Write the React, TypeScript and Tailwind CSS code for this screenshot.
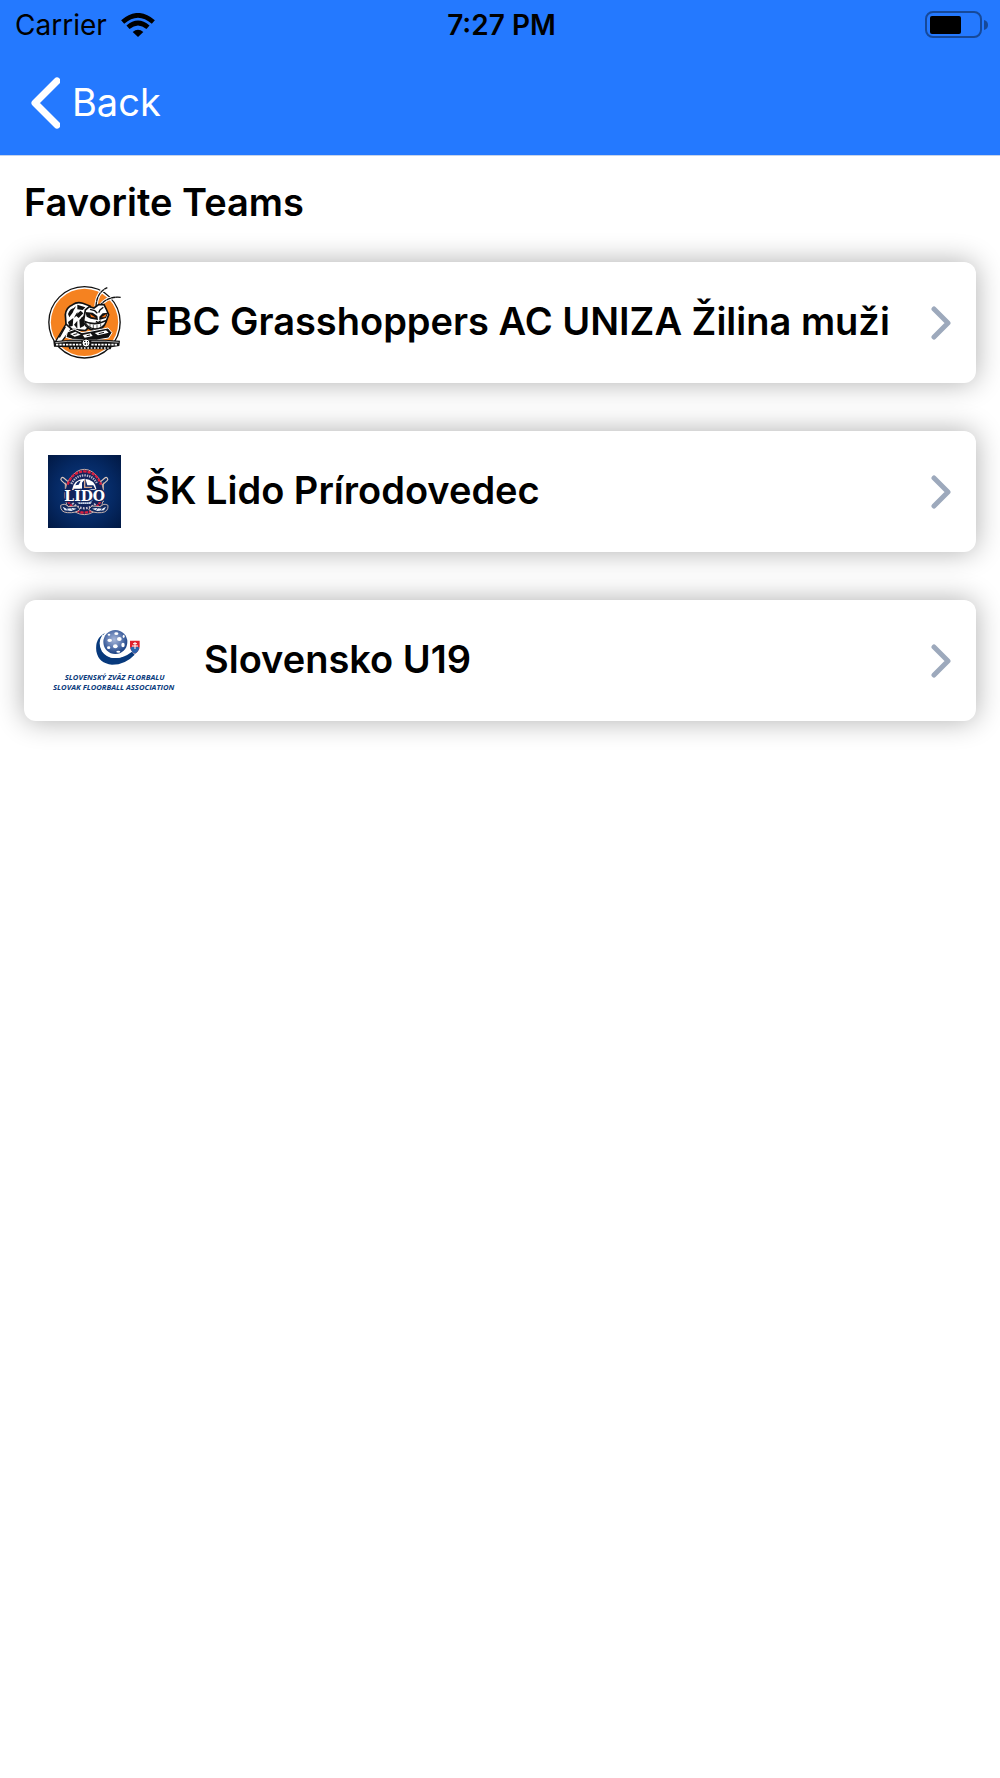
import type { ReactNode } from "react";

function GrasshoppersLogo() {
  return (
    <svg viewBox="24 32 219 219" className="h-[73px] w-[73px] shrink-0" role="img" aria-label="FBC Grasshoppers">
      <circle cx="133.500" cy="141" r="107" fill="#fff" stroke="#111" strokeWidth="4" />
      <circle cx="133.500" cy="141" r="101" fill="#f58220" />
      {/* antennae */}
      <path d="M168 94Q170 50 202 37M178 94Q200 62 242 66" fill="none" stroke="#fff" strokeWidth="10" />
      <path d="M168 94Q170 50 202 37M178 94Q200 62 242 66" fill="none" stroke="#111" strokeWidth="4" strokeDasharray="14 1" />
      {/* stick */}
      <path d="M84 136L46 200L60 206L96 158Z" fill="#fff" stroke="#111" strokeWidth="4" />
      <path d="M76 154L58 186" stroke="#111" strokeWidth="4" />
      {/* body */}
      <path d="M76 118Q78 96 98 88Q112 78 128 84L150 92L152 150L136 166L96 162L78 146Z" fill="#fff" stroke="#111" strokeWidth="5" />
      <path d="M84 116Q90 98 104 98L98 112L88 126ZM112 88L136 96L128 104L112 102ZM84 140L100 128L98 152L88 154ZM106 120L122 106L130 114L116 128ZM118 134L132 120V152L120 158ZM102 148L112 136L112 160Z" fill="#111" />
      <path d="M106 94L100 104M112 112L104 126M126 126L122 146" stroke="#111" strokeWidth="3" />
      {/* head */}
      <path d="M136 104L148 94L162 98L176 88L192 88L200 104L206 118L198 140Q190 164 164 166Q142 162 130 140Z" fill="#fff" stroke="#111" strokeWidth="5" />
      <path d="M136 110L158 112L172 122L174 134L152 130L140 124ZM204 112L188 114L178 124L178 134L198 128Z" fill="#111" />
      <path d="M150 116L168 127L153 125ZM200 115L184 126L196 126Z" fill="#f36f10" />
      <path d="M130 134Q164 152 202 132Q196 160 166 164Q140 158 130 134Z" fill="#111" />
      <path d="M138 142Q166 154 196 139Q190 156 165 159Q146 156 138 142Z" fill="#fff" />
      <path d="M150 146V155M160 148V158M171 148V158M182 145V154" stroke="#111" strokeWidth="2" />
      <path d="M150 102L164 106L172 114M190 96L180 104L176 112M168 138L174 142L182 136" fill="none" stroke="#111" strokeWidth="4" />
      {/* arms */}
      <path d="M82 170L104 162L126 172L150 168L204 158L216 172L206 188L170 194L98 192L78 186Z" fill="#111" stroke="#fff" strokeWidth="3" />
      <path d="M90 176L106 169L122 178L104 184ZM128 179L152 174L158 182L134 187ZM164 173L198 165L206 172L174 180Z" fill="#fff" />
      <path d="M100 178L112 175M140 181L150 179M176 175L192 171" stroke="#111" strokeWidth="3" />
      {/* name banner */}
      <path d="M40 198Q136 186 240 196L238 212L214 216L212 222H88L86 216L42 214Z" fill="#111" />
      <path d="M46 202Q80 196 124 198M154 198Q200 196 236 201" fill="none" stroke="#fff" strokeWidth="2" />
      <path d="M48 208H124M154 208H232" stroke="#fff" strokeWidth="5" strokeDasharray="7 3" />
      <path d="M92 218H206" stroke="#fff" strokeWidth="4" strokeDasharray="5 5" />
      <circle cx="138" cy="203" r="12" fill="#fff" stroke="#111" strokeWidth="3" />
      <path d="M132 198H136M141 199H144M134 206H138M142 206H144" stroke="#111" strokeWidth="4" />
    </svg>
  );
}

function LidoLogo() {
  return (
    <svg viewBox="24 29 219 219" className="h-[73px] w-[73px] shrink-0" role="img" aria-label="ŠK Lido Prírodovedec">
      <defs>
        <radialGradient id="lido-bg" r="0.700">
          <stop offset="0" stopColor="#0d3d86" />
          <stop offset="0.600" stopColor="#052862" />
          <stop offset="1" stopColor="#011944" />
        </radialGradient>
      </defs>
      <rect x="24" y="29" width="219" height="219" fill="url(#lido-bg)" />
      {/* crossed sticks */}
      <path d="M68 102L84 116M198 102L182 116" stroke="#d9c6bd" strokeWidth="14" strokeLinecap="round" />
      <path d="M68 102L84 116M198 102L182 116" stroke="#0a2a66" strokeWidth="7" strokeLinecap="round" />
      <path d="M76 112V170M190 112V170" stroke="#d9b9a5" strokeWidth="3" />
      {/* ring */}
      <path d="M80 178Q66 134 88 102Q108 72 133 72Q158 72 178 102Q200 134 186 178Q160 208 133 208Q106 208 80 178Z" fill="#12245c" stroke="#c9aca6" strokeWidth="3" />
      <path d="M83 118Q96 80 133 78Q170 80 183 118" fill="none" stroke="#d81f3f" strokeWidth="7" strokeDasharray="10 3" />
      <path d="M84 166Q100 200 133 202Q166 200 182 166" fill="none" stroke="#d81f3f" strokeWidth="7" strokeDasharray="10 3" />
      <path d="M94 116Q106 91 133 90Q160 91 172 116" fill="none" stroke="#bcb6cb" strokeWidth="7" strokeDasharray="4 3" />
      <path d="M97 173Q112 188 133 189Q154 188 169 173" fill="none" stroke="#c5becd" strokeWidth="7" strokeDasharray="5 4" />
      {/* ball */}
      <path d="M96 134Q100 102 133 100Q166 102 170 134Z" fill="#fff" />
      <path d="M106 120Q110 108 122 106L116 118ZM126 132V112L136 100L142 120H160L166 132Z" fill="#122a68" />
      <path d="M134 104V126H156" fill="none" stroke="#d8a98d" strokeWidth="4" />
      <path d="M108 163H158L152 176H116Z" fill="#dfe6f3" />
      <path d="M110 168H156M114 173H152" stroke="#17336f" strokeWidth="2" strokeDasharray="4 2" />
      {/* blades */}
      <path d="M62 180Q76 172 84 184L110 182L120 192Q108 204 82 202Q60 200 62 180ZM204 180Q190 172 182 184L156 182L146 192Q158 204 184 202Q206 200 204 180Z" fill="#10295f" stroke="#c6b4b0" strokeWidth="3" />
      <path d="M68 184L80 190L98 188L110 190L94 197L74 195ZM198 184L186 190L168 188L156 190L172 197L192 195Z" fill="#e8eef8" />
      <path d="M78 188L84 196M92 187L98 195M188 188L182 196M174 187L168 195" stroke="#17336f" strokeWidth="2" />
      <text x="134" y="166" textAnchor="middle" fill="#fff" stroke="#12245c" strokeWidth="8" paintOrder="stroke" className="font-['DejaVu_Serif','Liberation_Serif',serif] text-[42px] font-bold">LIDO</text>
    </svg>
  );
}

function SlovakFloorballLogo() {
  return (
    <svg viewBox="24 27 396 219" className="h-[73px] w-[132px] shrink-0" role="img" aria-label="Slovak Floorball Association">
      <defs>
        <radialGradient id="floorball" cx="0.450" cy="0.400" r="0.600">
          <stop offset="0" stopColor="#a7b7d9" />
          <stop offset="0.500" stopColor="#647fb4" />
          <stop offset="1" stopColor="#173f83" />
        </radialGradient>
      </defs>
      <path d="M195 54Q164 70 169 109Q176 146 216 149Q256 149 284 119L276 110Q246 133 217 128Q184 120 181 88Q180 68 195 54Z" fill="#07397c" />
      <path d="M190 60Q174 84 188 108Q208 136 248 122" fill="none" stroke="#fff" strokeWidth="5" />
      <circle cx="226" cy="81" r="36" fill="url(#floorball)" />
      <g fill="#fff">
        <ellipse cx="209" cy="76" rx="7" ry="5" />
        <ellipse cx="229" cy="56" rx="6" ry="4" />
        <ellipse cx="238" cy="72" rx="7" ry="6" />
        <ellipse cx="226" cy="94" rx="7" ry="6" />
        <ellipse cx="249" cy="90" rx="5" ry="7" />
        <ellipse cx="206" cy="98" rx="5" ry="4" />
        <ellipse cx="251" cy="64" rx="3" ry="5" />
        <ellipse cx="235" cy="110" rx="6" ry="3" />
        <ellipse cx="207" cy="59" rx="4" ry="3" />
      </g>
      <path d="M270 77H299V94Q298 109 285 116Q271 109 270 94Z" fill="#e1202c" />
      <path d="M271 98Q278 92 285 98Q292 92 298 98Q295 111 285 116Q274 111 271 98Z" fill="#2b63ad" />
      <path d="M285 81V102M279 86H291M276 93H294" stroke="#fff" strokeWidth="3" />
      <text x="224" y="194" textAnchor="middle" fill="#0a3b7c" className="font-['Open_Sans','Liberation_Sans',sans-serif] text-[23px] font-bold italic">SLOVENSKÝ ZVÄZ FLORBALU</text>
      <text x="221" y="225" textAnchor="middle" fill="#0a3b7c" className="font-['Open_Sans','Liberation_Sans',sans-serif] text-[23px] font-bold italic">SLOVAK FLOORBALL ASSOCIATION</text>
    </svg>
  );
}

function WifiIcon() {
  return (
    <svg viewBox="0 0 102 72" className="h-6 w-[34px]" aria-hidden="true">
      <path d="M51 72L35 57Q51 44 67 57Z" />
      <path d="M21 43Q51 17 81 43" fill="none" stroke="#000" strokeWidth="14" />
      <path d="M5 27Q51 -13 97 27" fill="none" stroke="#000" strokeWidth="14" />
    </svg>
  );
}

function BatteryIcon() {
  return (
    <svg viewBox="0 0 63 28" className="h-7 w-[63px]" role="img" aria-label="Battery">
      <rect x="1" y="1" width="55" height="25" rx="7" fill="none" stroke="#164999" strokeWidth="2" />
      <rect x="5" y="5" width="31" height="18" rx="2" />
      <path d="M59 9Q63 10 63 14Q63 18 59 19Z" fill="#164999" />
    </svg>
  );
}

interface Team {
  name: string;
  logo: ReactNode;
}

const teams: Team[] = [
  { name: "FBC Grasshoppers AC UNIZA Žilina muži", logo: <GrasshoppersLogo /> },
  { name: "ŠK Lido Prírodovedec", logo: <LidoLogo /> },
  { name: "Slovensko U19", logo: <SlovakFloorballLogo /> },
];

export default function App() {
  return (
    <div className="min-h-screen bg-white font-['Inter','Liberation_Sans',sans-serif] text-black">
      <header className="border-b border-[#c5d3ea] bg-[#2479ff]">
        {/* Status bar */}
        <div className="grid h-[50px] grid-cols-3 items-center pr-3 pl-[15px] text-[28px]">
          <div className="flex items-center gap-3.5">
            <span>Carrier</span>
            <WifiIcon />
          </div>
          <span className="text-center font-semibold">7:27 PM</span>
          <div className="flex justify-end">
            <BatteryIcon />
          </div>
        </div>

        <nav className="flex h-[105px] items-center px-[30px]">
          <button type="button" className="flex cursor-pointer items-center gap-3 text-[38px] text-white">
            <svg viewBox="0 0 30 52" className="h-[52px] w-[30px]" fill="none" aria-hidden="true">
              <path d="M27 4L5 26L27 48" stroke="currentColor" strokeWidth="7" strokeLinecap="round" strokeLinejoin="round" />
            </svg>
            Back
          </button>
        </nav>
      </header>

      <main className="px-6 pt-[22px]">
        <h1 className="text-[38px] leading-12 font-semibold">Favorite Teams</h1>
        <ul className="mt-9 flex flex-col gap-12">
          {teams.map((team) => (
            <li key={team.name}>
              <button
                type="button"
                className="flex w-full cursor-pointer items-center gap-6 rounded-xl bg-white p-6 text-left shadow-[0_0_28px_rgba(0,0,0,0.32)]"
              >
                {team.logo}
                <span className="flex-1 pb-1 text-[38px] leading-12 font-semibold">{team.name}</span>
                <svg viewBox="0 0 22 34" className="h-[34px] w-[22px] shrink-0" fill="none" aria-hidden="true">
                  <path d="M4 3L18 17L4 31" stroke="#9da9bc" strokeWidth="5" strokeLinecap="round" strokeLinejoin="round" />
                </svg>
              </button>
            </li>
          ))}
        </ul>
      </main>
    </div>
  );
}
